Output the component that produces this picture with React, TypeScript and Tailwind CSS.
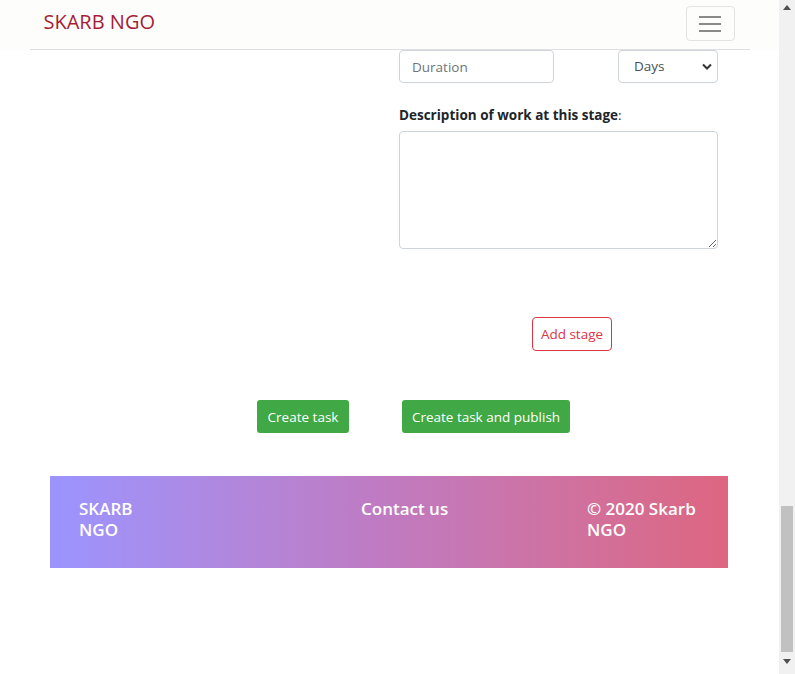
import React from "react";

export default function App() {
  const font = { fontFamily: '"Open Sans", "Noto Sans", sans-serif' };
  return (
    <div className="flex h-[674px] w-[795px] overflow-hidden bg-white" style={font}>
      <div className="flex w-[779px] flex-col">
        {/* Navbar */}
        <div className="bg-[#fdfdfb]">
          <div className="mx-auto flex h-[50px] w-[720px] items-center justify-between border-b border-[#dfdfe3] pl-[14px] pr-[15px]">
            <span className="mt-[-5px] text-[20px] text-[#a51d36]">SKARB NGO</span>
            <button className="mt-[-2px] flex h-[35px] w-[49px] flex-col items-center justify-center gap-[5px] rounded-[4px] border border-[#e3e3e3]">
              <span className="block h-[2px] w-[22px] bg-[#8a8a8a]" />
              <span className="block h-[2px] w-[22px] bg-[#8a8a8a]" />
              <span className="block h-[2px] w-[22px] bg-[#8a8a8a]" />
            </button>
          </div>
        </div>

        {/* Form */}
        <div className="flex flex-col pl-[399px]">
          <div className="flex w-[319px] items-start justify-between">
            <input
              placeholder="Duration"
              className="h-[33px] w-[155px] rounded-[4px] border border-[#ced4da] px-[12px] text-[13.5px] text-[#495057] outline-none placeholder:text-[#6c757d]"
            />
            <div className="relative h-[33px] w-[100px]">
              <select className="h-[33px] w-[100px] appearance-none rounded-[4px] border border-[#ced4da] bg-white pl-[15px] text-[13.5px] text-[#495057] outline-none">
                <option>Days</option>
              </select>
              <svg className="pointer-events-none absolute right-[6px] top-[13px]" width="10" height="7" viewBox="0 0 10 7">
                <path d="M1 1.5 L5 5.5 L9 1.5" fill="none" stroke="#333" strokeWidth="2" />
              </svg>
            </div>
          </div>

          <div className="mt-[22px] text-[13.5px] text-[#212529]">
            <span className="font-bold">Description of work at this stage</span>:
          </div>
          <textarea className="mt-[6px] h-[118px] w-[319px] rounded-[4px] border border-[#ced4da] outline-none" />

          <div className="mt-[68px] pl-[133px]">
            <button className="h-[34px] w-[80px] rounded-[4px] border border-[#dc3545] text-[13.5px] text-[#dc3545]">
              Add stage
            </button>
          </div>
        </div>

        <div className="mt-[49px] flex pl-[257px]">
          <button className="h-[33px] w-[92px] rounded-[3px] bg-[#40a844] text-[13.5px] text-white">Create task</button>
          <button className="ml-[53px] h-[33px] w-[168px] rounded-[3px] bg-[#40a844] text-[13.5px] text-white">
            Create task and publish
          </button>
        </div>

        {/* Footer */}
        <div className="ml-[50px] mt-[43px] flex h-[92px] w-[678px] bg-gradient-to-r from-[#9b94ff] via-[#c07ac0] to-[#dd6680] pl-[29px] pt-[22px] text-[17px] font-semibold leading-[21px] text-white">
          <div className="w-[70px]">SKARB NGO</div>
          <div className="ml-[212px] w-[160px]">Contact us</div>
          <div className="ml-[66px] w-[125px]">© 2020 Skarb NGO</div>
        </div>
      </div>

      {/* Scrollbar */}
      <div className="flex w-[16px] flex-col items-center bg-[#f1f1f1]">
        <svg className="mt-[5px]" width="8" height="5" viewBox="0 0 8 5">
          <path d="M0 5 L4 0 L8 5 Z" fill="#505050" />
        </svg>
        <div className="mt-[496px] h-[146px] w-[12px] bg-[#c1c1c1]" />
        <svg className="mt-[7px]" width="8" height="5" viewBox="0 0 8 5">
          <path d="M0 0 L4 5 L8 0 Z" fill="#505050" />
        </svg>
      </div>
    </div>
  );
}
